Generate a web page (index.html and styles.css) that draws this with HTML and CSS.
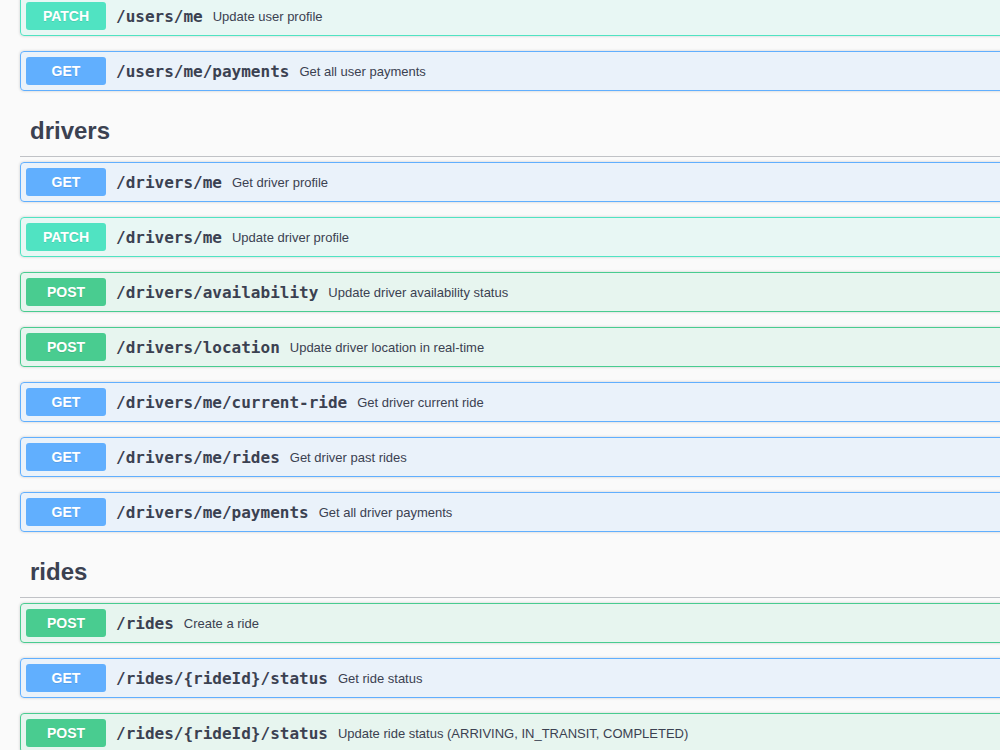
FILE: index.html
```html
<!DOCTYPE html>
<html>
<head>
  <meta charset="utf-8">
  <link rel="stylesheet" href="styles.css">
</head>
<body>
  <div class="wrapper">

    <div class="opblock opblock-patch">
      <span class="method">PATCH</span>
      <span class="path">/users/me</span>
      <span class="desc">Update user profile</span>
    </div>
    <div class="opblock opblock-get">
      <span class="method">GET</span>
      <span class="path">/users/me/payments</span>
      <span class="desc">Get all user payments</span>
    </div>

    <h3 class="opblock-tag">drivers</h3>
    <div class="opblock opblock-get">
      <span class="method">GET</span>
      <span class="path">/drivers/me</span>
      <span class="desc">Get driver profile</span>
    </div>
    <div class="opblock opblock-patch">
      <span class="method">PATCH</span>
      <span class="path">/drivers/me</span>
      <span class="desc">Update driver profile</span>
    </div>
    <div class="opblock opblock-post">
      <span class="method">POST</span>
      <span class="path">/drivers/availability</span>
      <span class="desc">Update driver availability status</span>
    </div>
    <div class="opblock opblock-post">
      <span class="method">POST</span>
      <span class="path">/drivers/location</span>
      <span class="desc">Update driver location in real-time</span>
    </div>
    <div class="opblock opblock-get">
      <span class="method">GET</span>
      <span class="path">/drivers/me/current-ride</span>
      <span class="desc">Get driver current ride</span>
    </div>
    <div class="opblock opblock-get">
      <span class="method">GET</span>
      <span class="path">/drivers/me/rides</span>
      <span class="desc">Get driver past rides</span>
    </div>
    <div class="opblock opblock-get">
      <span class="method">GET</span>
      <span class="path">/drivers/me/payments</span>
      <span class="desc">Get all driver payments</span>
    </div>

    <h3 class="opblock-tag">rides</h3>
    <div class="opblock opblock-post">
      <span class="method">POST</span>
      <span class="path">/rides</span>
      <span class="desc">Create a ride</span>
    </div>
    <div class="opblock opblock-get">
      <span class="method">GET</span>
      <span class="path">/rides/{rideId}/status</span>
      <span class="desc">Get ride status</span>
    </div>
    <div class="opblock opblock-post">
      <span class="method">POST</span>
      <span class="path">/rides/{rideId}/status</span>
      <span class="desc">Update ride status (ARRIVING, IN_TRANSIT, COMPLETED)</span>
    </div>

  </div>
</body>
</html>
```

FILE: styles.css
```css
html {
  overflow: hidden;
}

body {
  margin: 0;
  background: #fafafa;
  color: #3b4151;
  font-family: "Liberation Sans", Arial, sans-serif;
}

/* page is scrolled a little, so the first block is cut at the top;
   blocks run on past the right edge, so clip them here */
.wrapper {
  margin-top: -8px;
  padding: 4px 0 4px 20px;
  overflow: hidden;
}

/* tag heading with the thin rule below */
.opblock-tag {
  margin: 0 0 5px;
  padding: 10px 20px 10px 10px;
  border-bottom: 1px solid rgba(59, 65, 81, 0.3);
  font-size: 24px;
  font-weight: 700;
  line-height: 30px;
}

.opblock {
  display: flex;
  align-items: center;
  margin: 0 -8px 15px 0;
  padding: 5px;
  border: 1px solid #000;
  border-radius: 4px;
  box-shadow: 0 0 3px rgba(0, 0, 0, 0.19);
}

.method {
  min-width: 80px;
  padding: 6px 0;
  border-radius: 3px;
  color: #fff;
  font-size: 14px;
  font-weight: 700;
  line-height: 16px;
  text-align: center;
  text-shadow: 0 1px 0 rgba(0, 0, 0, 0.1);
}

.path {
  padding: 0 10px;
  font-family: "DejaVu Sans Mono", monospace;
  font-size: 16px;
  font-weight: 700;
  color: #3b4151;
}

.desc {
  font-size: 13px;
  color: #3b4151;
}

.opblock-get {
  background: rgba(97, 175, 254, 0.1);
  border-color: #61affe;
}

.opblock-get .method {
  background: #61affe;
}

.opblock-post {
  background: rgba(73, 204, 144, 0.1);
  border-color: #49cc90;
}

.opblock-post .method {
  background: #49cc90;
}

.opblock-patch {
  background: rgba(80, 227, 194, 0.1);
  border-color: #50e3c2;
}

.opblock-patch .method {
  background: #50e3c2;
}
```
